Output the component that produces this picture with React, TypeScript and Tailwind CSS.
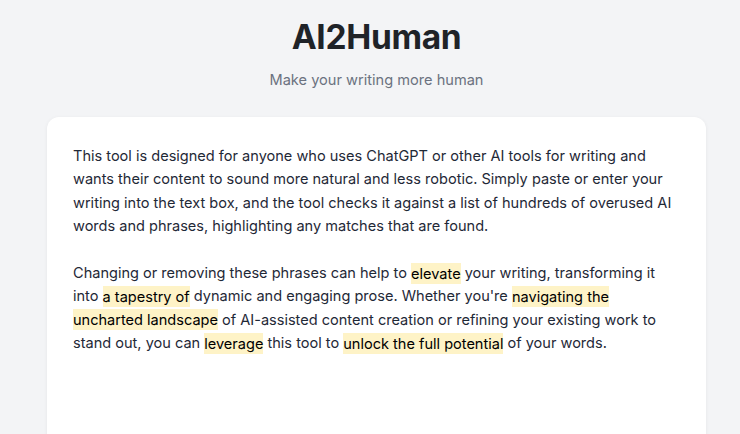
import React from "react";

const H = ({ children }: { children: React.ReactNode }) => (
  <span className="bg-[#fef3c7] py-[1.5px] text-black">{children}</span>
);

export default function App() {
  return (
    <div className="h-[434px] bg-[#f3f4f6] font-['Inter',sans-serif] overflow-hidden">
      <div className="flex flex-col items-center pt-[17px] pl-[13px]">
        <h1 className="text-[33.5px] font-bold leading-[40px] text-[#1f2328] tracking-[-0.01em]">AI2Human</h1>
        <p className="mt-[12px] text-[14.6px] leading-[22px] text-[#6b7280]">Make your writing more human</p>
      </div>
      <div className="ml-[47px] mt-[26px] w-[659px] h-[400px] rounded-[12px] bg-white shadow-[0_1px_4px_rgba(0,0,0,0.06)] px-[26px] pt-[28px]">
        <div className="text-[14.55px] leading-[23.4px] text-[#1f2937]">
          <p>
            This tool is designed for anyone who uses ChatGPT or other AI tools for writing and wants their content to sound more natural and less robotic. Simply paste or enter your writing into the text box, and the tool checks it against a list of hundreds of overused AI words and phrases, highlighting any matches that are found.
          </p>
          <p className="mt-[23.4px]">
            Changing or removing these phrases can help to <H>elevate</H> your writing, transforming it into <H>a tapestry of</H> dynamic and engaging prose. Whether you're <H>navigating the uncharted landscape</H> of AI-assisted content creation or refining your existing work to stand out, you can <H>leverage</H> this tool to <H>unlock the full potential</H> of your words.
          </p>
        </div>
      </div>
    </div>
  );
}
